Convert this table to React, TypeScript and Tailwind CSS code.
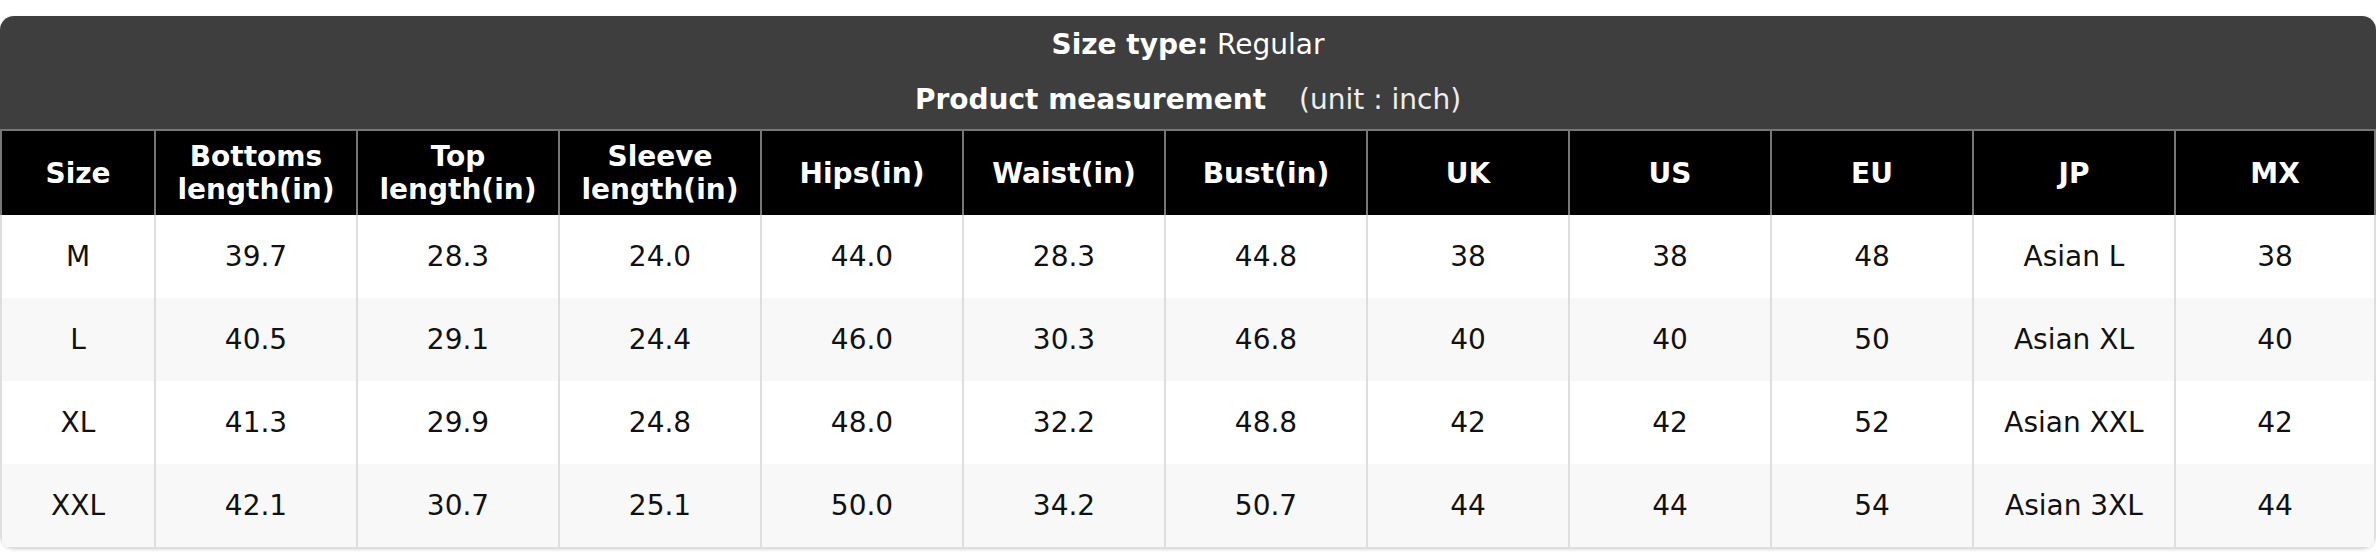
import React from 'react';

const headers = ['Size', 'Bottoms\nlength(in)', 'Top\nlength(in)', 'Sleeve\nlength(in)', 'Hips(in)', 'Waist(in)', 'Bust(in)', 'UK', 'US', 'EU', 'JP', 'MX'];

const rows = [
  ['M', '39.7', '28.3', '24.0', '44.0', '28.3', '44.8', '38', '38', '48', 'Asian L', '38'],
  ['L', '40.5', '29.1', '24.4', '46.0', '30.3', '46.8', '40', '40', '50', 'Asian XL', '40'],
  ['XL', '41.3', '29.9', '24.8', '48.0', '32.2', '48.8', '42', '42', '52', 'Asian XXL', '42'],
  ['XXL', '42.1', '30.7', '25.1', '50.0', '34.2', '50.7', '44', '44', '54', 'Asian 3XL', '44'],
];

export default function App() {
  return (
    <div className="w-[2376px] h-[552px] bg-white pt-[16px]" style={{ fontFamily: '"DejaVu Sans", Verdana, sans-serif' }}>
      <div className="rounded-[14px] overflow-hidden shadow-[0_1px_3px_rgba(0,0,0,0.12)]">
        <div className="bg-[#3e3e3e] text-white text-[28px] text-center">
          <div className="h-[54px] flex items-end justify-center pb-[4px]">
            <span><b>Size type:</b> Regular</span>
          </div>
          <div className="h-[59px] flex items-center justify-center">
            <b>Product measurement</b>
            <span className="ml-[33px] text-[#eeeeee]">(unit : inch)</span>
          </div>
        </div>
        <div className="grid grid-cols-[154px_repeat(11,1fr)] bg-black border-t-2 border-[#777]">
          {headers.map((h, i) => (
            <div
              key={h}
              className={`h-[84px] flex items-center justify-center text-center text-white font-bold text-[28px] leading-[33px] whitespace-pre-line border-l-2 border-[#777] ${i === 11 ? 'border-r-2' : ''}`}
            >
              {h}
            </div>
          ))}
        </div>
        {rows.map((r, ri) => (
          <div
            key={r[0]}
            className={`grid grid-cols-[154px_repeat(11,1fr)] ${ri % 2 === 1 ? 'bg-[#f8f8f8]' : 'bg-white'} ${ri === 3 ? 'border-b-2 border-[#dedede]' : ''}`}
          >
            {r.map((c, ci) => (
              <div
                key={ci}
                className={`h-[83px] flex items-center justify-center text-[28px] text-[#111] border-l-2 border-[#dedede] ${ci === 11 ? 'border-r-2' : ''}`}
              >
                {c}
              </div>
            ))}
          </div>
        ))}
      </div>
    </div>
  );
}
